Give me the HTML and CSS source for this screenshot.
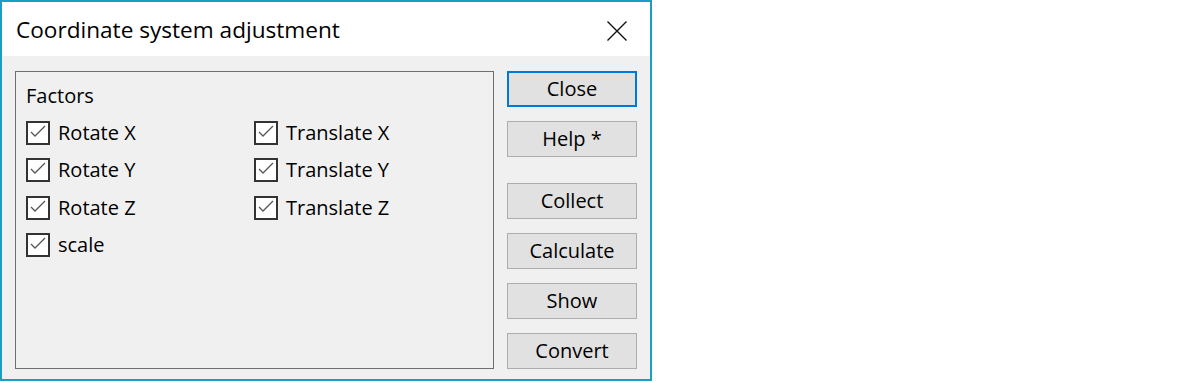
FILE: index.html
```html
<!DOCTYPE html>
<html lang="en">
<head>
<meta charset="utf-8">
<title>Coordinate system adjustment</title>
<link rel="stylesheet" href="styles.css">
</head>
<body>
<div class="dialog">
  <div class="titlebar">
    <span class="title">Coordinate system adjustment</span>
    <button class="close-x" aria-label="Close">
      <svg width="20" height="20" viewBox="0 0 20 20"><path d="M0.5 0.5L19.5 19.5M19.5 0.5L0.5 19.5" stroke="#111" stroke-width="1.4" fill="none"/></svg>
    </button>
  </div>

  <div class="content">
    <fieldset class="group">
      <div class="group-title">Factors</div>
      <div class="checks">
        <label class="check"><span class="box"><svg viewBox="0 0 20 20" width="20" height="20"><path d="M3 9L7 13L17 3" stroke="#555" stroke-width="1.3" fill="none"/></svg></span>Rotate X</label>
        <label class="check"><span class="box"><svg viewBox="0 0 20 20" width="20" height="20"><path d="M3 9L7 13L17 3" stroke="#555" stroke-width="1.3" fill="none"/></svg></span>Translate X</label>
        <label class="check"><span class="box"><svg viewBox="0 0 20 20" width="20" height="20"><path d="M3 9L7 13L17 3" stroke="#555" stroke-width="1.3" fill="none"/></svg></span>Rotate Y</label>
        <label class="check"><span class="box"><svg viewBox="0 0 20 20" width="20" height="20"><path d="M3 9L7 13L17 3" stroke="#555" stroke-width="1.3" fill="none"/></svg></span>Translate Y</label>
        <label class="check"><span class="box"><svg viewBox="0 0 20 20" width="20" height="20"><path d="M3 9L7 13L17 3" stroke="#555" stroke-width="1.3" fill="none"/></svg></span>Rotate Z</label>
        <label class="check"><span class="box"><svg viewBox="0 0 20 20" width="20" height="20"><path d="M3 9L7 13L17 3" stroke="#555" stroke-width="1.3" fill="none"/></svg></span>Translate Z</label>
        <label class="check"><span class="box"><svg viewBox="0 0 20 20" width="20" height="20"><path d="M3 9L7 13L17 3" stroke="#555" stroke-width="1.3" fill="none"/></svg></span>scale</label>
      </div>
    </fieldset>

    <div class="buttons">
      <button class="btn default">Close</button>
      <button class="btn">Help *</button>
      <button class="btn spaced">Collect</button>
      <button class="btn">Calculate</button>
      <button class="btn">Show</button>
      <button class="btn">Convert</button>
    </div>
  </div>
</div>
</body>
</html>
```

FILE: styles.css
```css
body{margin:0;background:#fff;font-family:"Open Sans",sans-serif;font-size:20px;color:#000}
.dialog{width:652px;height:381px;box-sizing:border-box;border:2px solid #18a0c2;display:flex;flex-direction:column;background:#f0f0f0}
.titlebar{height:55px;box-sizing:border-box;background:#fff;display:flex;align-items:center;justify-content:space-between;padding:3px 23px 0 14px}
.title{font-size:22.6px;line-height:1}
.close-x{border:0;background:none;padding:0;width:20px;height:20px;display:flex}

.content{flex:1;display:flex;gap:13px;padding:15px 13px 10px 13px}
.group{margin:0;padding:12px 10px 0;border:1px solid #6e6e6e;width:479px;height:298px;box-sizing:border-box}
.group-title{line-height:24px;margin-bottom:13px}
.checks{display:grid;grid-template-columns:228px 1fr;grid-auto-rows:24px;row-gap:13.3px}
.check{display:flex;align-items:center;gap:8px;line-height:24px}
.box{width:24px;height:24px;box-sizing:border-box;border:2px solid #333;background:#fff;flex:none;display:flex}

.buttons{display:flex;flex-direction:column;gap:14px;width:130px}
.btn{height:36px;box-sizing:border-box;border:1px solid #adadad;background:#e1e1e1;font:inherit;color:#000;padding:0;line-height:1}
.btn.default{border:2px solid #0078d7}
.btn.spaced{margin-top:12px}
```
